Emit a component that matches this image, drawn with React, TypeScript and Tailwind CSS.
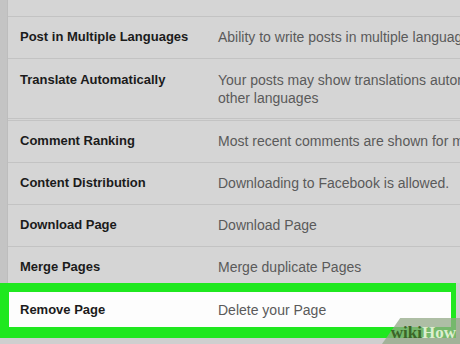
import React from 'react';

type Setting = {
  label: string;
  desc: string[];
  divider?: boolean;
};

const settings: Setting[] = [
  { label: 'Post in Multiple Languages', desc: ['Ability to write posts in multiple languages'] },
  {
    label: 'Translate Automatically',
    desc: ['Your posts may show translations automatically for people who read', 'other languages'],
    divider: true,
  },
  { label: 'Comment Ranking', desc: ['Most recent comments are shown for my Page by default.'] },
  { label: 'Content Distribution', desc: ['Downloading to Facebook is allowed.'] },
  { label: 'Download Page', desc: ['Download Page'] },
];

function Row({ s }: { s: Setting }) {
  return (
    <div
      className={`flex border-b border-[#c3c3c3] ${s.divider ? 'pt-[12px] pb-[11px]' : 'pt-[11px] pb-[12px]'}`}
    >
      <div className="w-[210px] shrink-0 pl-[12px] text-[13px] leading-[18px] font-bold text-[#1b1b1b]">
        {s.label}
      </div>
      <div className="whitespace-nowrap text-[14px] leading-[18px] text-[#5a5a5a]">
        {s.desc.map((line) => (
          <div key={line}>{line}</div>
        ))}
      </div>
    </div>
  );
}

export default function App() {
  return (
    <div
      className="relative h-[344px] w-[460px] overflow-hidden bg-[#cfcfcf]"
      style={{ fontFamily: '"Liberation Sans", Arial, sans-serif' }}
    >
      <div className="flex h-[283px]">
        <div className="w-[7px] shrink-0 bg-[#c4c4c4]" />
        <div className="flex-1 overflow-hidden border-l border-[#bdbdbd] bg-[#d5d5d5]">
          <div className="h-[17px] border-b border-[#c3c3c3]" />
          {settings.map((s) => (
            <React.Fragment key={s.label}>
              <Row s={s} />
              {s.divider && <div className="h-[2px] border-b border-[#c3c3c3]" />}
            </React.Fragment>
          ))}
          <div className="flex pt-[11px]">
            <div className="w-[210px] shrink-0 pl-[12px] text-[13px] leading-[18px] font-bold text-[#1b1b1b]">
              Merge Pages
            </div>
            <div className="whitespace-nowrap text-[14px] leading-[18px] text-[#5a5a5a]">
              Merge duplicate Pages
            </div>
          </div>
        </div>
      </div>

      <div className="mr-[4px] border-t-[9px] border-b-[11px] border-l-[9px] border-r-[5px] border-[#1fe81f] bg-[#fdfdfd]">
        <div className="flex h-[35px] items-center">
          <div className="w-[209px] shrink-0 pl-[11px] text-[13px] leading-[18px] font-bold text-[#1b1b1b]">
            Remove Page
          </div>
          <div className="whitespace-nowrap text-[14px] leading-[18px] text-[#5a5a5a]">
            Delete your Page
          </div>
        </div>
      </div>

      {/* wikiHow watermark */}
      <div className="absolute bottom-0 right-0 h-[26px] w-[86px]">
        <div className="absolute inset-0 origin-bottom-left skew-x-[-35deg] translate-x-[8px] bg-[#93a887]/75" />
        <div
          className="absolute bottom-[3px] right-[4px] text-[17px] font-bold leading-none"
          style={{ fontFamily: '"Liberation Serif", "Times New Roman", serif' }}
        >
          <span className="text-[#3b6527]">wiki</span>
          <span className="text-[#dcefcf]">How</span>
        </div>
      </div>
    </div>
  );
}
